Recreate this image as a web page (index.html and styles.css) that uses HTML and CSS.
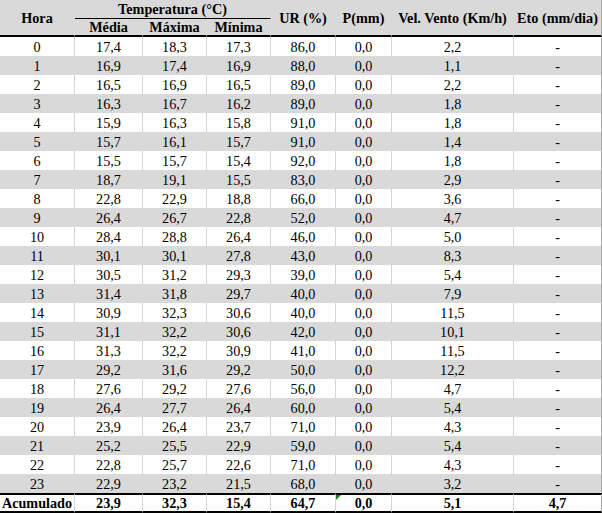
FILE: index.html
```html
<!DOCTYPE html>
<html lang="pt">
<head>
<meta charset="utf-8">
<title>Dados horários</title>
<link rel="stylesheet" href="styles.css">
</head>
<body>
<table class="sheet">
  <colgroup>
    <col class="c-hora"><col class="c-med"><col class="c-max"><col class="c-min"><col class="c-ur"><col class="c-p"><col class="c-vel"><col class="c-eto">
  </colgroup>
  <thead>
    <tr class="h1">
      <th rowspan="2" class="hb">Hora</th>
      <th colspan="3" class="temp">Temperatura (°C)</th>
      <th rowspan="2" class="hb">UR (%)</th>
      <th rowspan="2" class="hb">P(mm)</th>
      <th rowspan="2" class="hb">Vel. Vento (Km/h)</th>
      <th rowspan="2" class="hb last">Eto (mm/dia)</th>
    </tr>
    <tr class="h2">
      <th class="hb">Média</th>
      <th class="hb">Máxima</th>
      <th class="hb">Mínima</th>
    </tr>
  </thead>
  <tbody>
    <tr><td>0</td><td>17,4</td><td>18,3</td><td>17,3</td><td>86,0</td><td>0,0</td><td>2,2</td><td class="last">-</td></tr>
    <tr class="alt"><td>1</td><td>16,9</td><td>17,4</td><td>16,9</td><td>88,0</td><td>0,0</td><td>1,1</td><td class="last">-</td></tr>
    <tr><td>2</td><td>16,5</td><td>16,9</td><td>16,5</td><td>89,0</td><td>0,0</td><td>2,2</td><td class="last">-</td></tr>
    <tr class="alt"><td>3</td><td>16,3</td><td>16,7</td><td>16,2</td><td>89,0</td><td>0,0</td><td>1,8</td><td class="last">-</td></tr>
    <tr><td>4</td><td>15,9</td><td>16,3</td><td>15,8</td><td>91,0</td><td>0,0</td><td>1,8</td><td class="last">-</td></tr>
    <tr class="alt"><td>5</td><td>15,7</td><td>16,1</td><td>15,7</td><td>91,0</td><td>0,0</td><td>1,4</td><td class="last">-</td></tr>
    <tr><td>6</td><td>15,5</td><td>15,7</td><td>15,4</td><td>92,0</td><td>0,0</td><td>1,8</td><td class="last">-</td></tr>
    <tr class="alt"><td>7</td><td>18,7</td><td>19,1</td><td>15,5</td><td>83,0</td><td>0,0</td><td>2,9</td><td class="last">-</td></tr>
    <tr><td>8</td><td>22,8</td><td>22,9</td><td>18,8</td><td>66,0</td><td>0,0</td><td>3,6</td><td class="last">-</td></tr>
    <tr class="alt"><td>9</td><td>26,4</td><td>26,7</td><td>22,8</td><td>52,0</td><td>0,0</td><td>4,7</td><td class="last">-</td></tr>
    <tr><td>10</td><td>28,4</td><td>28,8</td><td>26,4</td><td>46,0</td><td>0,0</td><td>5,0</td><td class="last">-</td></tr>
    <tr class="alt"><td>11</td><td>30,1</td><td>30,1</td><td>27,8</td><td>43,0</td><td>0,0</td><td>8,3</td><td class="last">-</td></tr>
    <tr><td>12</td><td>30,5</td><td>31,2</td><td>29,3</td><td>39,0</td><td>0,0</td><td>5,4</td><td class="last">-</td></tr>
    <tr class="alt"><td>13</td><td>31,4</td><td>31,8</td><td>29,7</td><td>40,0</td><td>0,0</td><td>7,9</td><td class="last">-</td></tr>
    <tr><td>14</td><td>30,9</td><td>32,3</td><td>30,6</td><td>40,0</td><td>0,0</td><td>11,5</td><td class="last">-</td></tr>
    <tr class="alt"><td>15</td><td>31,1</td><td>32,2</td><td>30,6</td><td>42,0</td><td>0,0</td><td>10,1</td><td class="last">-</td></tr>
    <tr><td>16</td><td>31,3</td><td>32,2</td><td>30,9</td><td>41,0</td><td>0,0</td><td>11,5</td><td class="last">-</td></tr>
    <tr class="alt"><td>17</td><td>29,2</td><td>31,6</td><td>29,2</td><td>50,0</td><td>0,0</td><td>12,2</td><td class="last">-</td></tr>
    <tr><td>18</td><td>27,6</td><td>29,2</td><td>27,6</td><td>56,0</td><td>0,0</td><td>4,7</td><td class="last">-</td></tr>
    <tr class="alt"><td>19</td><td>26,4</td><td>27,7</td><td>26,4</td><td>60,0</td><td>0,0</td><td>5,4</td><td class="last">-</td></tr>
    <tr><td>20</td><td>23,9</td><td>26,4</td><td>23,7</td><td>71,0</td><td>0,0</td><td>4,3</td><td class="last">-</td></tr>
    <tr class="alt"><td>21</td><td>25,2</td><td>25,5</td><td>22,9</td><td>59,0</td><td>0,0</td><td>5,4</td><td class="last">-</td></tr>
    <tr><td>22</td><td>22,8</td><td>25,7</td><td>22,6</td><td>71,0</td><td>0,0</td><td>4,3</td><td class="last">-</td></tr>
    <tr class="alt"><td>23</td><td>22,9</td><td>23,2</td><td>21,5</td><td>68,0</td><td>0,0</td><td>3,2</td><td class="last">-</td></tr>
  </tbody>
  <tfoot>
    <tr class="total">
      <td>Acumulado</td><td>23,9</td><td>32,3</td><td>15,4</td><td>64,7</td><td class="flag">0,0</td><td>5,1</td><td class="last">4,7</td>
    </tr>
  </tfoot>
</table>
</body>
</html>
```

FILE: styles.css
```css
html, body {
  margin: 0;
  padding: 0;
  background: #ffffff;
}

.sheet {
  border-collapse: separate;
  border-spacing: 0;
  table-layout: fixed;
  width: 602px;
  font-family: "Liberation Serif", "Times New Roman", serif;
  font-size: 14.2px;
  line-height: 16px;
  color: #000000;
}

.c-hora { width: 75px; }
.c-med { width: 68px; }
.c-max { width: 64px; }
.c-min { width: 64px; }
.c-ur { width: 65px; }
.c-p { width: 56px; }
.c-vel { width: 122px; }
.c-eto { width: 88px; }

.sheet th,
.sheet td {
  padding: 0;
  text-align: center;
  vertical-align: middle;
  white-space: nowrap;
  border-right: 1px solid #d4d4d4;
}

.sheet th {
  background: #d9d9d9;
  font-weight: bold;
  border-right-color: #d9d9d9;
}

.sheet .last {
  border-right-color: #a9a9a9;
}

.h1 { height: 19px; }
.h2 { height: 18px; }

.temp {
  border-bottom: 1px solid #000000;
}

.hb {
  border-bottom: 2px solid #000000;
}

.sheet tbody tr { height: 19px; }

.sheet tbody tr.alt td {
  background: #d9d9d9;
}

.sheet tbody tr.alt td:not(.last) {
  border-right-color: #d9d9d9;
}

.total { height: 19px; }

.total td {
  font-weight: bold;
  border-top: 2px solid #000000;
  border-bottom: 2px solid #000000;
}

.flag {
  position: relative;
}

.flag::before {
  content: "";
  position: absolute;
  top: 0;
  left: 0;
  width: 0;
  height: 0;
  border-top: 5px solid #0b8a0b;
  border-right: 5px solid transparent;
}
```
